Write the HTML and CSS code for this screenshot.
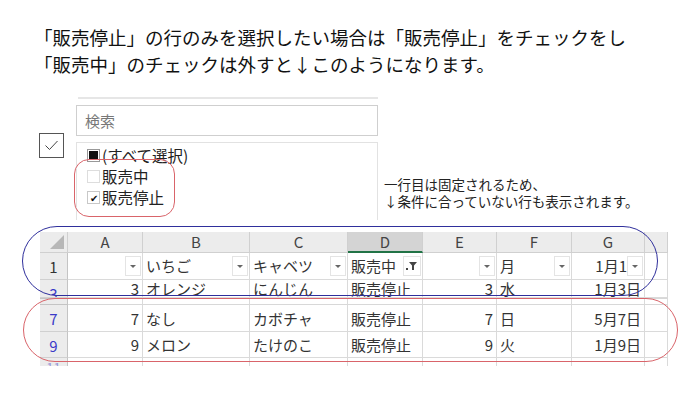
FILE: index.html
```html
<!DOCTYPE html>
<html lang="ja">
<head>
  <meta charset="UTF-8">
  <title>販売停止のフィルター</title>
  <link rel="stylesheet" href="styles.css">
</head>
<body>
  <div class="page">
    <div class="title">
      <p>「販売停止」の行のみを選択したい場合は「販売停止」をチェックをし</p>
      <p>「販売中」のチェックは外すと↓このようになります。</p>
    </div>

    <div class="filter-area">
      <div class="check-icon">
        <svg width="25" height="25" viewBox="0 0 25 25">
          <rect x="0.5" y="0.5" width="24" height="24" fill="#fff" stroke="#555"/>
          <path d="M6.5 12.5 L10.5 16.5 L18.5 8" fill="none" stroke="#444" stroke-width="1"/>
        </svg>
      </div>

      <div class="panel">
        <div class="panel-top"></div>
        <div class="search">検索</div>
        <div class="list">
          <div class="item"><span class="box partial"></span>(すべて選択)</div>
          <div class="item"><span class="box empty"></span>販売中</div>
          <div class="item"><span class="box checked">&#10004;</span>販売停止</div>
        </div>
        <div class="mark mark-list"></div>
      </div>

      <div class="note">
        <p>一行目は固定されるため、</p>
        <p>↓条件に合っていない行も表示されます。</p>
      </div>
    </div>

    <div class="sheet-wrap">
      <div class="sheet">
        <!-- column headers -->
        <div class="hd corner"></div>
        <div class="hd">A</div>
        <div class="hd">B</div>
        <div class="hd">C</div>
        <div class="hd active">D</div>
        <div class="hd">E</div>
        <div class="hd">F</div>
        <div class="hd">G</div>
        <div class="hd"></div>

        <!-- row 1 (frozen) -->
        <div class="rh plain">1</div>
        <div class="c"><span class="txt"></span><span class="dd"></span></div>
        <div class="c"><span class="txt">いちご</span><span class="dd"></span></div>
        <div class="c"><span class="txt">キャベツ</span><span class="dd"></span></div>
        <div class="c"><span class="txt">販売中</span><span class="dd filter"><svg width="12" height="10" viewBox="0 0 12 10"><rect x="0" y="7" width="2" height="2" fill="#444"/><path d="M3 1 H11 L8 4.5 V9 H6 V4.5 Z" fill="#444"/></svg></span></div>
        <div class="c"><span class="txt"></span><span class="dd"></span></div>
        <div class="c"><span class="txt">月</span><span class="dd"></span></div>
        <div class="c"><span class="txt num">1月1</span><span class="dd"></span></div>
        <div class="c"></div>

        <!-- row 3 (cut off) -->
        <div class="rh">3</div>
        <div class="c num">3</div>
        <div class="c">オレンジ</div>
        <div class="c">にんじん</div>
        <div class="c">販売停止</div>
        <div class="c num">3</div>
        <div class="c">水</div>
        <div class="c num">1月3日</div>
        <div class="c"></div>

        <!-- hidden rows -->
        <div class="rh gap"></div>
        <div class="c gap"></div>
        <div class="c gap"></div>
        <div class="c gap"></div>
        <div class="c gap"></div>
        <div class="c gap"></div>
        <div class="c gap"></div>
        <div class="c gap"></div>
        <div class="c gap"></div>

        <!-- row 7 -->
        <div class="rh">7</div>
        <div class="c num">7</div>
        <div class="c">なし</div>
        <div class="c">カボチャ</div>
        <div class="c">販売停止</div>
        <div class="c num">7</div>
        <div class="c">日</div>
        <div class="c num">5月7日</div>
        <div class="c"></div>

        <!-- row 9 -->
        <div class="rh">9</div>
        <div class="c num">9</div>
        <div class="c">メロン</div>
        <div class="c">たけのこ</div>
        <div class="c">販売停止</div>
        <div class="c num">9</div>
        <div class="c">火</div>
        <div class="c num">1月9日</div>
        <div class="c"></div>

        <!-- next row, cut off -->
        <div class="rh tail">11</div>
        <div class="c tail"></div>
        <div class="c tail"></div>
        <div class="c tail"></div>
        <div class="c tail"></div>
        <div class="c tail"></div>
        <div class="c tail"></div>
        <div class="c tail"></div>
        <div class="c tail"></div>
      </div>

      <div class="mark mark-frozen"></div>
      <div class="mark mark-result"></div>
    </div>
  </div>
</body>
</html>
```

FILE: styles.css
```css
body {
  margin: 0;
  background-color: #fff;
  color: #111;
  font-family: 'Noto Sans CJK JP', 'Noto Sans', sans-serif;
}

p {
  margin: 0;
}

.page {
  width: 700px;
  height: 394px;
  overflow: hidden;
}

.title {
  padding: 24px 0 0 34px;
  font-size: 18.5px;
  line-height: 27px;
  white-space: nowrap;
}

/* filter dropdown */

.filter-area {
  display: flex;
  margin-top: 19px;
  padding-left: 39px;
  height: 123px;
}

.check-icon {
  width: 25px;
  height: 25px;
  margin-top: 36px;
}

.check-icon svg {
  display: block;
}

.panel {
  position: relative;
  width: 302px;
  margin-left: 12px;
}

.panel-top {
  height: 2px;
  margin-left: 2px;
  background-color: #e6e6e6;
}

.search {
  height: 31px;
  margin-top: 6px;
  box-sizing: border-box;
  border: 1px solid #cfcfcf;
  padding-left: 8px;
  font-size: 15px;
  line-height: 29px;
  color: #777;
}

.list {
  height: 78px;
  margin-top: 6px;
  box-sizing: border-box;
  border: 1px solid #e2e2e2;
  border-bottom: none;
  padding: 2px 0 0 10px;
  font-size: 15.5px;
  line-height: 21px;
  color: #222;
}

.item {
  display: flex;
  align-items: center;
}

.box {
  width: 13px;
  height: 13px;
  margin-right: 2px;
  box-sizing: border-box;
  border: 1px solid #c8c8c8;
  background-color: #fff;
  display: flex;
  align-items: center;
  justify-content: center;
  font-size: 10px;
  line-height: 1;
  color: #111;
}

.box.partial {
  border-color: #999;
}

.box.partial::after {
  content: "";
  width: 9px;
  height: 9px;
  background-color: #111;
}

.box.empty {
  border-color: #ddd;
}

.note {
  align-self: flex-end;
  margin: 0 0 10px 6px;
  font-size: 13.5px;
  line-height: 17px;
  color: #222;
  white-space: nowrap;
}

/* spreadsheet */

.sheet-wrap {
  position: relative;
  margin: 12px 0 0 40px;
  width: 628px;
}

.sheet {
  display: grid;
  grid-template-columns: 28px 75px 107px 98px 75px 74px 75px 73px 23px;
  grid-template-rows: 21px 27px 18px 7px 27px 26px 8px;
  font-size: 15px;
  color: #333;
}

.sheet > div {
  box-sizing: border-box;
  overflow: hidden;
  white-space: nowrap;
}

.hd {
  background-color: #ececec;
  border-right: 1px solid #d0d0d0;
  border-bottom: 1px solid #d0d0d0;
  text-align: center;
  line-height: 20px;
  color: #444;
}

.hd.active {
  background-color: #d4d4d4;
  border-bottom: 2px solid #217346;
}

.corner {
  position: relative;
}

.corner::after {
  content: "";
  position: absolute;
  right: 3px;
  bottom: 3px;
  border-left: 14px solid transparent;
  border-bottom: 14px solid #b7b7b7;
}

.rh {
  background-color: #ececec;
  border-right: 1px solid #c4c4c4;
  border-bottom: 1px solid #d0d0d0;
  text-align: center;
  line-height: 27px;
  color: #3a3ac8;
}

.rh.plain {
  color: #333;
}

.c {
  border-right: 1px solid #dadada;
  border-bottom: 1px solid #dadada;
  padding: 0 3px;
  line-height: 27px;
  display: flex;
  align-items: center;
}

.c.num {
  justify-content: flex-end;
}

.c .txt {
  flex: 1;
  overflow: hidden;
  line-height: 26px;
}

.c .txt.num {
  text-align: right;
}

.sheet > .gap {
  border-top: 1px solid #d8d8d8;
  border-bottom: 1px solid #d8d8d8;
}

.rh.gap {
  border-top-color: #c4c4c4;
  border-bottom-color: #c4c4c4;
}

.sheet > .tail {
  border-bottom: none;
  line-height: 20px;
  align-items: flex-start;
}

.rh.tail {
  color: #9a9ad8;
  font-size: 13px;
}

.dd {
  width: 16px;
  height: 20px;
  margin-right: -2px;
  box-sizing: border-box;
  border: 1px solid #e4e4e4;
  background-color: #fff;
  display: flex;
  align-items: center;
  justify-content: center;
  flex-shrink: 0;
}

.dd::after {
  content: "";
  border-left: 3px solid transparent;
  border-right: 3px solid transparent;
  border-top: 3px solid #666;
}

.dd.filter {
  width: 18px;
}

.dd.filter::after {
  display: none;
}

.dd svg {
  display: block;
}

/* hand-drawn highlight marks */

.mark {
  position: absolute;
  box-sizing: border-box;
  pointer-events: none;
}

.mark-list {
  left: -2px;
  top: 62px;
  width: 101px;
  height: 58px;
  border: 1.5px solid #d9646a;
  border-radius: 15px;
}

.mark-frozen {
  left: -18px;
  top: -6px;
  width: 636px;
  height: 70px;
  border: 1.5px solid #2f2f9c;
  border-radius: 35px;
}

.mark-result {
  left: -17px;
  top: 66px;
  width: 655px;
  height: 64px;
  border: 1.5px solid #d9646a;
  border-radius: 32px;
}
```
